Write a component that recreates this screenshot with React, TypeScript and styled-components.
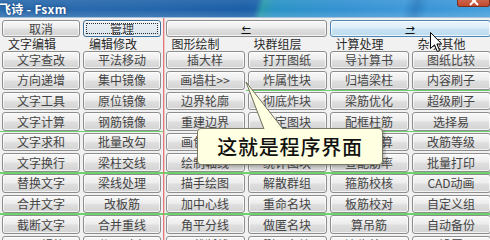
import React from 'react';
import styled, { createGlobalStyle, css } from 'styled-components';

const GlobalStyle = createGlobalStyle`
    html, body {
        margin: 0;
        padding: 0;
        background: #f1f1f1;
    }
    body {
        font-family: 'Noto Sans CJK SC', 'Noto Sans', sans-serif;
    }
`;

type Cell = { text: string; sep?: boolean };

// green separators fall after these rows (1-based)
const leftSeps = [4, 6, 8];
const midSeps = [6, 8];
const rightSeps = [2, 4, 6, 8];

const makeCol = (texts: string[], seps: number[]): Cell[] => texts.map((text, i) => ({ text, sep: seps.includes(i + 1) }));

const leftColumns = [
    makeCol(['文字查改', '方向递增', '文字工具', '文字计算', '文字求和', '文字换行', '替换文字', '合并文字', '截断文字', '图以规格'], leftSeps),
    makeCol(['平法移动', '集中镜像', '原位镜像', '钢筋镜像', '批量改勾', '梁柱交线', '梁线处理', '改板筋', '合并重线', '分开对齐'], leftSeps),
];

const rightColumns = [
    makeCol(['插大样', '画墙柱>>', '边界轮廓', '重建边界', '画包络线', '绘制轴线', '描手绘图', '加中心线', '角平分线', '三截断线'], midSeps),
    makeCol(['打开图纸', '炸属性块', '彻底炸块', '指定图块', '块属性表', '统计图块', '解散群组', '重命名块', '做匿名块', '删匿名块'], rightSeps),
    makeCol(['导计算书', '归墙梁柱', '梁筋优化', '配框柱筋', '钢筋计算', '查配筋率', '箍筋校核', '板筋校对', '算吊筋', '边缘处理'], rightSeps),
    makeCol(['图纸比较', '内容刷子', '超级刷子', '选择易', '改筋等级', '批量打印', 'CAD动画', '自定义组', '自动备份', '设置'], rightSeps),
];

const App: React.FC = () => {
    return (
        <Window>
            <GlobalStyle />
            <TitleBar>
                <Title>飞诗 - Fsxm</Title>
                <CloseBtn>
                    <svg width="12" height="7" viewBox="0 0 12 7">
                        <path d="M2 -3 L10 5 M10 -3 L2 5" stroke="#fff" strokeWidth="2" />
                    </svg>
                </CloseBtn>
            </TitleBar>
            <Body>
                <Pane $width={159} $cols={2} style={{ marginLeft: 2 }}>
                    <TopRow $cols={2}>
                        <Btn $top>取消</Btn>
                        <Btn $top $variant="focus">
                            <FocusRing>管理</FocusRing>
                        </Btn>
                    </TopRow>
                    <LabelRow $cols={2}>
                        <Label>文字编辑</Label>
                        <Label>编辑修改</Label>
                    </LabelRow>
                    <Columns $cols={2}>
                        {leftColumns.map((col, ci) => (
                            <Column key={ci}>
                                {col.map((cell, ri) => (
                                    <CellBox key={ri} $sep={cell.sep}>
                                        <Btn>{cell.text}</Btn>
                                    </CellBox>
                                ))}
                            </Column>
                        ))}
                    </Columns>
                </Pane>
                <Divider />
                <Pane $width={325} $cols={4}>
                    <TopRow $cols={2}>
                        <Btn $top>
                            <Arrow>←</Arrow>
                        </Btn>
                        <Btn $top $variant="hover">
                            <Arrow>→</Arrow>
                        </Btn>
                    </TopRow>
                    <LabelRow $cols={4}>
                        <Label>图形绘制</Label>
                        <Label>块群组层</Label>
                        <Label>计算处理</Label>
                        <Label>杂项其他</Label>
                    </LabelRow>
                    <Columns $cols={4}>
                        {rightColumns.map((col, ci) => (
                            <Column key={ci}>
                                {col.map((cell, ri) => (
                                    <CellBox key={ri} $sep={cell.sep}>
                                        <Btn>{cell.text}</Btn>
                                    </CellBox>
                                ))}
                            </Column>
                        ))}
                    </Columns>
                </Pane>
            </Body>

            {/* callout balloon over the buttons */}
            <Pointer width="50" height="50" viewBox="0 0 50 50">
                <polygon points="1,0 19,47 38,47" fill="#ffffe1" />
                <path d="M1 0 L19 47 M1 0 L38 47" stroke="#6f6f58" strokeWidth="1" fill="none" />
            </Pointer>
            <Balloon>这就是程序界面</Balloon>

            <Cursor width="13" height="21" viewBox="0 0 13 21">
                <path d="M0.5 0.5 L0.5 16.5 L4.5 12.8 L7.3 19.5 L9.6 18.5 L6.9 12 L11.8 12 Z" fill="#fff" stroke="#000" strokeWidth="1" />
            </Cursor>
        </Window>
    );
};

const Window = styled.div`
    position: relative;
    width: 490px;
    height: 240px;
    overflow: hidden;
    background: #f1f1f1;
`;

const TitleBar = styled.div`
    display: flex;
    align-items: flex-start;
    height: 17px;
    border-bottom: 1px solid #a8c2dc;
    background:
        linear-gradient(to bottom, rgba(255, 255, 255, 0.08), rgba(255, 255, 255, 0) 55%, rgba(255, 255, 255, 0.14)),
        linear-gradient(105deg, #2b6bae 0%, #2466ab 30%, #1b5fa7 50%, #1c62aa 52%, #2b9aae 53.5%, #2a93c6 56%, #3592d2 70%, #3e98d8 82%, #2d7fc2 84.5%, #3a95d6 87%, #46a0dc 100%);
`;

const Title = styled.div`
    padding: 2px 0 0 0;
    margin-left: -1px;
    color: #fff;
    font-size: 12px;
    font-weight: bold;
    line-height: 13px;
    letter-spacing: 0.3px;
    text-shadow: 0 0 3px rgba(0, 30, 80, 0.6);
`;

const CloseBtn = styled.div`
    margin-left: auto;
    width: 33px;
    height: 7px;
    display: flex;
    justify-content: center;
    background: linear-gradient(#c9644c, #c44a2e);
    border: 1px solid #7a3020;
    border-top: none;
    border-radius: 0 0 3px 3px;
    box-sizing: border-box;
`;

const Body = styled.div`
    display: flex;
    align-items: stretch;
    height: 222px;
`;

const Pane = styled.div<{ $width: number; $cols: number }>`
    width: ${(p) => p.$width}px;
    flex: none;
    display: flex;
    flex-direction: column;
`;

const gridCols = css<{ $cols: number }>`
    display: grid;
    grid-template-columns: repeat(${(p) => p.$cols}, 1fr);
    column-gap: 3px;
`;

const TopRow = styled.div<{ $cols: number }>`
    ${gridCols};
    margin-top: 2px;
    height: 17px;
`;

const LabelRow = styled.div<{ $cols: number }>`
    ${gridCols};
    height: 12.5px;
`;

const Label = styled.div`
    padding-left: 6px;
    font-size: 12px;
    line-height: 13px;
    color: #2a2a2a;
    white-space: nowrap;
`;

const Columns = styled.div<{ $cols: number }>`
    ${gridCols};
`;

const Column = styled.div`
    display: flex;
    flex-direction: column;
`;

const CellBox = styled.div<{ $sep?: boolean }>`
    position: relative;
    height: 20.6px;
    padding: 1px 0;
    box-sizing: border-box;
    display: flex;
    ${(p) =>
        p.$sep &&
        css`
            &::after {
                content: '';
                position: absolute;
                left: -2px;
                right: -2px;
                bottom: -0.5px;
                height: 1.4px;
                background: #6bd36b;
            }
        `}
`;

const Btn = styled.div<{ $top?: boolean; $variant?: 'focus' | 'hover' }>`
    flex: 1;
    height: ${(p) => (p.$top ? '17px' : 'auto')};
    box-sizing: border-box;
    display: flex;
    align-items: center;
    justify-content: center;
    border: 1px solid #8d8d8d;
    border-radius: 3px;
    background: linear-gradient(to bottom, #f8f8f8 0%, #ededed 45%, #dedede 55%, #d3d3d3 100%);
    box-shadow: inset 0 0 0 1px rgba(255, 255, 255, 0.7);
    color: #444;
    font-size: 12px;
    line-height: 1;
    white-space: nowrap;
    overflow: hidden;
    ${(p) =>
        p.$variant === 'focus' &&
        css`
            border-color: #3d6e97;
            background: linear-gradient(to bottom, #eef4f8 0%, #e3ebf1 50%, #d6e1e9 100%);
            padding: 2px;
        `}
    ${(p) =>
        p.$variant === 'hover' &&
        css`
            border-color: #4d86b4;
            background: linear-gradient(to bottom, #eaf5fb 0%, #dcedf8 48%, #c8e3f3 52%, #bddcef 100%);
        `}
`;

const FocusRing = styled.div`
    flex: 1;
    align-self: stretch;
    display: flex;
    align-items: center;
    justify-content: center;
    border: 1px dotted #303030;
`;

const Arrow = styled.span`
    font-family: 'DejaVu Sans', sans-serif;
    font-size: 11px;
    line-height: 11px;
    color: #111;
    text-decoration: underline;
    text-underline-offset: 1px;
`;

const Divider = styled.div`
    width: 1px;
    flex: none;
    margin: 0 2px 0 1.5px;
    background: #e07878;
    box-shadow: 1px 0 0 rgba(240, 170, 170, 0.6);
`;

const Pointer = styled.svg`
    position: absolute;
    left: 245px;
    top: 82px;
    overflow: visible;
    z-index: 2;
`;

const Balloon = styled.div`
    position: absolute;
    left: 197px;
    top: 128px;
    width: 186px;
    height: 37px;
    box-sizing: border-box;
    display: flex;
    align-items: center;
    justify-content: center;
    background: #ffffe1;
    border: 1px solid #7a7a68;
    border-radius: 4px;
    box-shadow: 2px 2px 3px rgba(0, 0, 0, 0.25);
    color: #111;
    font-size: 20px;
    font-weight: 500;
    letter-spacing: 0.8px;
    z-index: 1;
`;

const Cursor = styled.svg`
    position: absolute;
    left: 430px;
    top: 32px;
    z-index: 3;
`;

export default App;
